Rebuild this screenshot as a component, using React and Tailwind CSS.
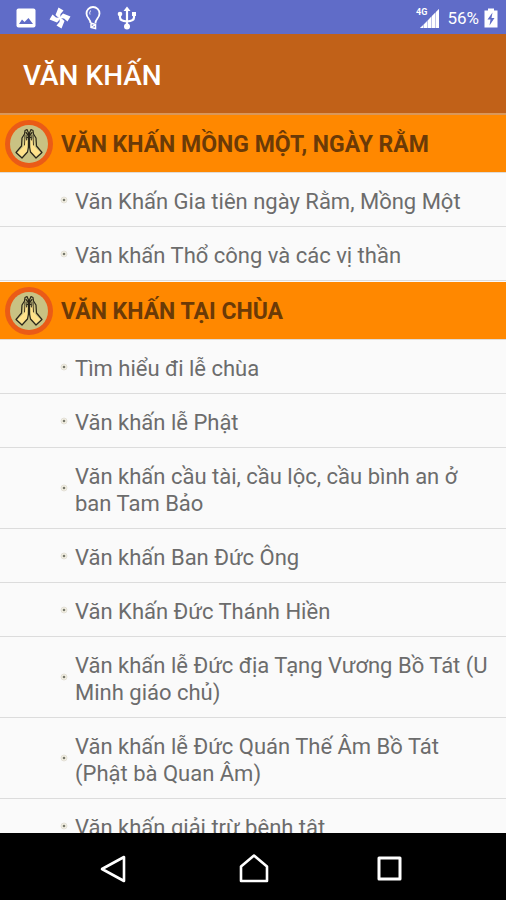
import React from "react";

const groups = [
  {
    title: "VĂN KHẤN MỒNG MỘT, NGÀY RẰM",
    items: [
      "Văn Khấn Gia tiên ngày Rằm, Mồng Một",
      "Văn khấn Thổ công và các vị thần",
    ],
  },
  {
    title: "VĂN KHẤN TẠI CHÙA",
    items: [
      "Tìm hiểu đi lễ chùa",
      "Văn khấn lễ Phật",
      "Văn khấn cầu tài, cầu lộc, cầu bình an ở ban Tam Bảo",
      "Văn khấn Ban Đức Ông",
      "Văn Khấn Đức Thánh Hiền",
      "Văn khấn lễ Đức địa Tạng Vương Bồ Tát (U Minh giáo chủ)",
      "Văn khấn lễ Đức Quán Thế Âm Bồ Tát (Phật bà Quan Âm)",
      "Văn khấn giải trừ bệnh tật",
    ],
  },
];

const PrayerIcon = () => (
  <svg viewBox="0 0 48 48" className="size-12 shrink-0" aria-hidden="true">
    <circle cx="24" cy="24" r="24" fill="#ea5b17" />
    <circle cx="24" cy="24" r="19" fill="#c9c283" />
    <g strokeLinejoin="round" strokeLinecap="round">
      <path
        d="M23.5 13 22 9.5 20 10.5 19.5 14 17 18 16.5 26 11 32.5 17 38 22.5 32 23.5 27Z"
        fill="#c9c283"
        stroke="#2b2618"
        strokeWidth="1.2"
      />
      <path
        d="M24.5 13 26 9.5 28 10.5 28.5 14 31 18 31.5 26 37 32.5 31 38 25.5 32 24.5 27Z"
        fill="#c9c283"
        stroke="#2b2618"
        strokeWidth="1.2"
      />
      <path d="M19 18 18.5 26.5 12.5 32.5 17 36.5 22 31 22.5 20Z" fill="#ffe28a" />
      <path d="M29 18 29.5 26.5 35.5 32.5 31 36.5 26 31 25.5 20Z" fill="#ffe28a" />
      <path
        d="M20 15 19.5 25M28 15 28.5 25M22 15 21.5 20M26 15 26.5 20"
        fill="none"
        stroke="#2b2618"
        strokeWidth="0.9"
      />
      <path d="M21 12.5 24 16 27 12.5M22 17.5h4" fill="none" stroke="#2b2618" strokeWidth="1.2" />
    </g>
  </svg>
);

const Bullet = () => (
  <svg viewBox="0 0 8 8" className="mb-1 size-2 shrink-0" aria-hidden="true">
    <circle cx="4" cy="4" r="3" fill="#f4f1e4" stroke="#dedbd2" strokeWidth="0.8" />
    <circle cx="4" cy="4" r="1.3" fill="#77786c" />
  </svg>
);

const StatusBar = () => (
  <div className="flex h-[34px] shrink-0 items-center justify-between bg-[#606cc8] pt-px pr-2 pl-4 text-white">
    <div className="flex items-center gap-[13px]">
      <svg viewBox="0 0 20 20" className="size-5" aria-hidden="true">
        <rect x="0.5" y="0.5" width="19" height="19" rx="2" fill="#fff" />
        <path d="M3 16 6 11.5 8.5 14 12.5 10 17 16Z" fill="#606cc8" />
      </svg>
      <svg viewBox="0 0 22 22" className="size-[22px]" fill="#fff" aria-hidden="true">
        <path d="M11 12 6.5 8 9.5 0.5 14.5 3.5 11.5 7Z" />
        <path d="M10 11 14 6.5 21.5 9.5 18.5 14.5 15 11.5Z" />
        <path d="M11 10 15.5 14 12.5 21.5 7.5 18.5 10.5 15Z" />
        <path d="M12 11 8 15.5 0.5 12.5 3.5 7.5 7 10.5Z" />
      </svg>
      <svg
        viewBox="0 0 18 24"
        className="h-6 w-[18px]"
        fill="none"
        stroke="#fff"
        strokeWidth="1.8"
        aria-hidden="true"
      >
        <path d="M6.5 17C6.5 13 2.5 12 2.5 7.5A6.5 6.5 0 0 1 15.5 7.5C15.5 12 11.5 13 11.5 17" />
        <path d="M7 4.5C5.5 5.5 5.5 7 6 8.5" strokeWidth="1" />
        <path d="M6.5 17 11.5 18.5M7 17.5V21.5L11.5 22.5V18.5L7 21.5" strokeWidth="1.5" />
      </svg>
      <svg
        viewBox="0 0 20 24"
        className="ml-0.5 h-6 w-5"
        fill="none"
        stroke="#fff"
        strokeWidth="2.2"
        aria-hidden="true"
      >
        <path d="M10 3V20M3 9V11.5Q3 15 10 15.5Q17 15 17 11.5V9" />
        <path d="M10 0.5 13.5 5H6.5ZM15 6h4v4h-4Z" fill="#fff" stroke="none" />
        <circle cx="10" cy="20.5" r="3" fill="#fff" stroke="none" />
        <circle cx="3" cy="8" r="2.3" fill="#fff" stroke="none" />
      </svg>
    </div>
    <div className="flex items-center">
      <svg viewBox="0 0 24 22" className="h-[22px] w-6" aria-hidden="true">
        <text
          x="0"
          y="8"
          fill="#fff"
          fontSize="9"
          fontWeight="700"
          fontFamily="Roboto, sans-serif"
        >
          4G
        </text>
        <path d="M4 21 7 18.5V21ZM8 17.5 11 14.5V21H8Z" fill="#fff" />
        <path d="M12 13.5 15 10V21H12ZM16 9 19 6V21H16ZM20 5 23 2V21H20Z" fill="#fff" />
        <path d="M4 21 23 2V21Z" fill="#fff" fillOpacity="0.6" />
      </svg>
      <span className="ml-[7px] text-[17px] leading-5">56%</span>
      <svg viewBox="0 0 14 20" className="ml-[5px] h-5 w-3.5" aria-hidden="true">
        <path d="M4 0.5h6V2.5h3.5V19.5H0.5V2.5H4Z" fill="#fff" />
        <path d="M8.5 4.5 3.5 11.5H6.5L5.5 17.5 10.5 10H7.5Z" fill="#606cc8" />
      </svg>
    </div>
  </div>
);

const NavBar = () => (
  <nav className="flex h-[67px] shrink-0 items-center justify-center gap-[106px] bg-black pt-1">
    <button type="button" aria-label="Quay lại">
      <svg viewBox="0 0 32 32" className="size-8" fill="none" stroke="#fff" strokeWidth="2.6" strokeLinejoin="round">
        <path d="M25 4V28L3 16Z" />
      </svg>
    </button>
    <button type="button" aria-label="Màn hình chính">
      <svg viewBox="0 0 32 32" className="size-8" fill="none" stroke="#fff" strokeWidth="2.6" strokeLinejoin="round">
        <path d="M4 28V13.5L17 2.5 30 13.5V28Z" />
      </svg>
    </button>
    <button type="button" aria-label="Ứng dụng gần đây">
      <svg viewBox="0 0 32 32" className="size-8" fill="none" stroke="#fff" strokeWidth="3" strokeLinejoin="round">
        <path d="M4 5H25V26H4Z" />
      </svg>
    </button>
  </nav>
);

const App = () => {
  return (
    <div className="flex h-screen flex-col bg-[#fafafa] font-['Roboto',sans-serif]">
      <StatusBar />
      <header className="flex h-[81px] shrink-0 items-center border-b-2 border-[#d9975a] bg-[#c16118] px-[23px] pt-1">
        <h1 className="text-[28px] leading-8 font-medium text-white">VĂN KHẤN</h1>
      </header>

      <main className="min-h-0 flex-1 overflow-hidden">
        {groups.map((group) => (
          <section key={group.title} className="pb-px">
            <h2>
              <button
                type="button"
                className="flex h-[58px] w-full items-center gap-2 border-b border-[#e0dcd6] bg-[#ff8800] pl-[5px] text-left text-[23px] leading-7 font-bold text-[#6b3a07]"
              >
                <PrayerIcon />
                <span className="pt-0.5">{group.title}</span>
              </button>
            </h2>
            <ul>
              {group.items.map((item) => (
                <li key={item} className="border-b border-[#dcdcdc]">
                  <a
                    href="#"
                    className="flex items-center gap-[7px] pt-[15px] pr-4 pb-[11px] pl-[60px] text-[22px] leading-[27px] text-[#6c6c6c]"
                  >
                    <Bullet />
                    {item}
                  </a>
                </li>
              ))}
            </ul>
          </section>
        ))}
      </main>

      <NavBar />
    </div>
  );
};

export default App;
